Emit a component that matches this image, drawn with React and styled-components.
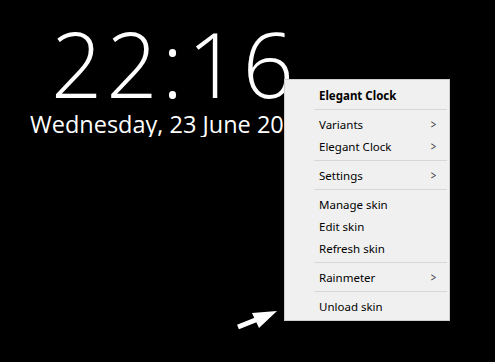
import React from "react";
import styled, { createGlobalStyle } from "styled-components";

const Global = createGlobalStyle`
  html, body {
    margin: 0;
    padding: 0;
    background: #000;
    overflow: hidden;
  }
`;

const Desktop = styled.div`
  position: relative;
  width: 495px;
  height: 362px;
  background: #000;
  overflow: hidden;
`;

const Clock = styled.div`
  display: flex;
  flex-direction: column;
  padding: 16px 0 0 30px;
  color: #fff;
`;

const Time = styled.div`
  font-family: "Open Sans", "Noto Sans", sans-serif;
  font-weight: 300;
  font-size: 90px;
  line-height: 95px;
  margin-left: 21px;
  letter-spacing: 4px;
`;

const DateLine = styled.div`
  width: 254px;
  overflow: hidden;
  font-family: "Open Sans", "Noto Sans", sans-serif;
  font-size: 23.5px;
  line-height: 26px;
  white-space: nowrap;
`;

const Menu = styled.div`
  position: absolute;
  left: 284px;
  top: 79px;
  width: 162px;
  padding: 4px 0 3px 2px;
  background: #f0f0f0;
  border: 1px solid #cfcfcf;
  display: flex;
  flex-direction: column;
  font-family: "Noto Sans", "Open Sans", sans-serif;
  font-size: 11.5px;
  color: #000;
`;

const Item = styled.div`
  display: flex;
  align-items: center;
  justify-content: space-between;
  height: 22px;
  padding: 0 12px 0 32px;
  font-weight: ${(p) => (p.bold ? 700 : 400)};
`;

const Chevron = styled.span`
  font-size: 12px;
  color: #333;
  transform: scaleX(0.8);
`;

const Separator = styled.div`
  height: 1px;
  margin: 3px 2px 3px 27px;
  background: #d7d7d7;
`;

const Arrow = styled.svg`
  position: absolute;
  left: 234px;
  top: 308px;
`;

const entries = [
  { label: "Elegant Clock", bold: true },
  "sep",
  { label: "Variants", sub: true },
  { label: "Elegant Clock", sub: true },
  "sep",
  { label: "Settings", sub: true },
  "sep",
  { label: "Manage skin" },
  { label: "Edit skin" },
  { label: "Refresh skin" },
  "sep",
  { label: "Rainmeter", sub: true },
  "sep",
  { label: "Unload skin" },
];

export default function App() {
  return (
    <Desktop>
      <Global />
      <Clock>
        <Time>22:16</Time>
        <DateLine>Wednesday, 23 June 2021</DateLine>
      </Clock>
      <Menu>
        {entries.map((e, i) =>
          e === "sep" ? (
            <Separator key={i} />
          ) : (
            <Item key={i} bold={e.bold}>
              <span>{e.label}</span>
              {e.sub && <Chevron>&gt;</Chevron>}
            </Item>
          )
        )}
      </Menu>
      <Arrow width="46" height="24" viewBox="0 0 46 24">
        <polygon points="43,3 18,5 25,20" fill="#fff" />
        <line x1="4" y1="19" x2="24" y2="11" stroke="#fff" strokeWidth="5" />
      </Arrow>
    </Desktop>
  );
}
